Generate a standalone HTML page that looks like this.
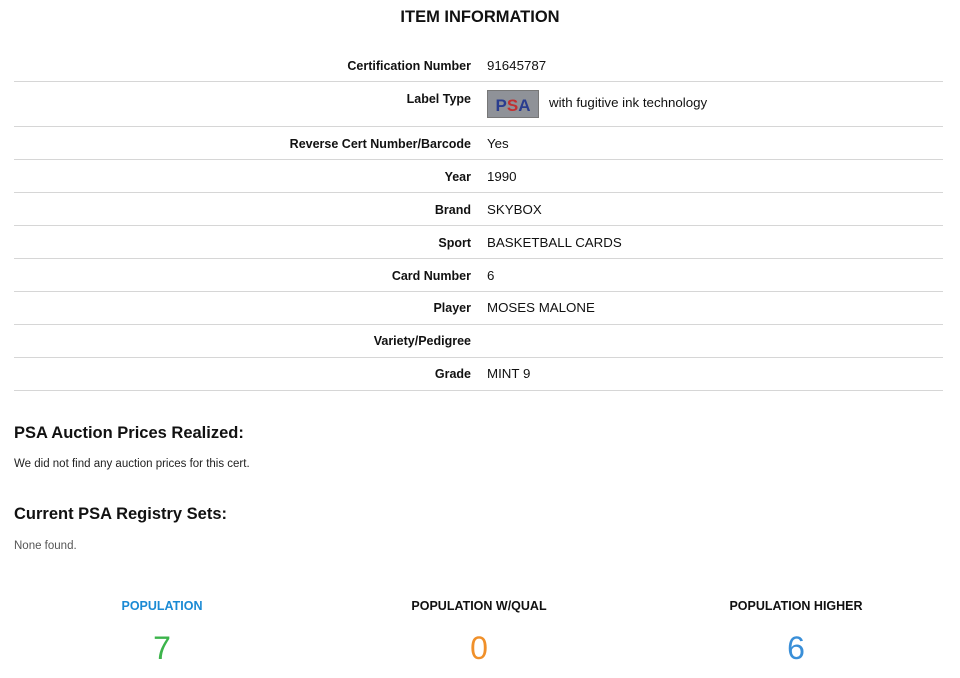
<!DOCTYPE html>
<html><head><meta charset="utf-8"><style>
*{margin:0;padding:0;box-sizing:border-box}
body{width:960px;height:678px;background:#fff;font-family:"Liberation Sans",sans-serif;color:#111;position:relative;overflow:hidden}
.a{position:absolute}
h1{position:absolute;top:8px;left:0;width:960px;text-align:center;font-size:16.5px;font-weight:bold;color:#111}
.line{position:absolute;left:14px;width:929px;height:1px;background:#d6d6d6}
.lbl{position:absolute;right:489px;font-size:12.5px;font-weight:bold;text-align:right;white-space:nowrap}
.val{position:absolute;left:487px;font-size:13.3px;white-space:nowrap}
h2{position:absolute;left:14px;font-size:16.5px;font-weight:bold}
.sm{position:absolute;left:14px;font-size:11.5px}
.ph{position:absolute;font-size:12.5px;font-weight:bold;text-align:center;width:300px}
.pn{position:absolute;font-size:32px;font-weight:300;text-align:center;width:300px}
</style></head><body>
<h1>ITEM INFORMATION</h1>
<div class="lbl" style="top:59px">Certification Number</div><div class="val" style="top:58px">91645787</div>
<div class="line" style="top:81px"></div>
<div class="lbl" style="top:92px">Label Type</div>
<div class="a" style="left:487px;top:90px;width:52px;height:28px;background:#8f9298;border:1px solid #777">
<svg width="50" height="26" viewBox="0 0 50 26"><text x="25" y="20" text-anchor="middle" font-family="Liberation Sans" font-weight="bold" font-size="17" fill="#2a3d8f">P<tspan fill="#c23030">S</tspan>A</text></svg></div>
<div class="val" style="top:95px;left:549px">with fugitive ink technology</div>
<div class="line" style="top:126px"></div>
<div class="lbl" style="top:137px">Reverse Cert Number/Barcode</div><div class="val" style="top:136px">Yes</div>
<div class="line" style="top:159px"></div>
<div class="lbl" style="top:170px">Year</div><div class="val" style="top:169px">1990</div>
<div class="line" style="top:192px"></div>
<div class="lbl" style="top:203px">Brand</div><div class="val" style="top:202px">SKYBOX</div>
<div class="line" style="top:225px"></div>
<div class="lbl" style="top:236px">Sport</div><div class="val" style="top:235px">BASKETBALL CARDS</div>
<div class="line" style="top:258px"></div>
<div class="lbl" style="top:269px">Card Number</div><div class="val" style="top:268px">6</div>
<div class="line" style="top:291px"></div>
<div class="lbl" style="top:301px">Player</div><div class="val" style="top:300px">MOSES MALONE</div>
<div class="line" style="top:324px"></div>
<div class="lbl" style="top:334px">Variety/Pedigree</div>
<div class="line" style="top:357px"></div>
<div class="lbl" style="top:367px">Grade</div><div class="val" style="top:366px">MINT 9</div>
<div class="line" style="top:390px"></div>
<h2 style="top:424px">PSA Auction Prices Realized:</h2>
<div class="sm" style="top:458px;color:#222">We did not find any auction prices for this cert.</div>
<h2 style="top:505px">Current PSA Registry Sets:</h2>
<div class="sm" style="top:540px;color:#555">None found.</div>
<div class="ph" style="left:12px;top:599px;color:#1a8ad4">POPULATION</div>
<div class="ph" style="left:329px;top:599px">POPULATION W/QUAL</div>
<div class="ph" style="left:646px;top:599px">POPULATION HIGHER</div>
<div class="pn" style="left:12px;top:630px;color:#3cb44b">7</div>
<div class="pn" style="left:329px;top:630px;color:#f0902a">0</div>
<div class="pn" style="left:646px;top:630px;color:#3a8fd8">6</div>
</body></html>
